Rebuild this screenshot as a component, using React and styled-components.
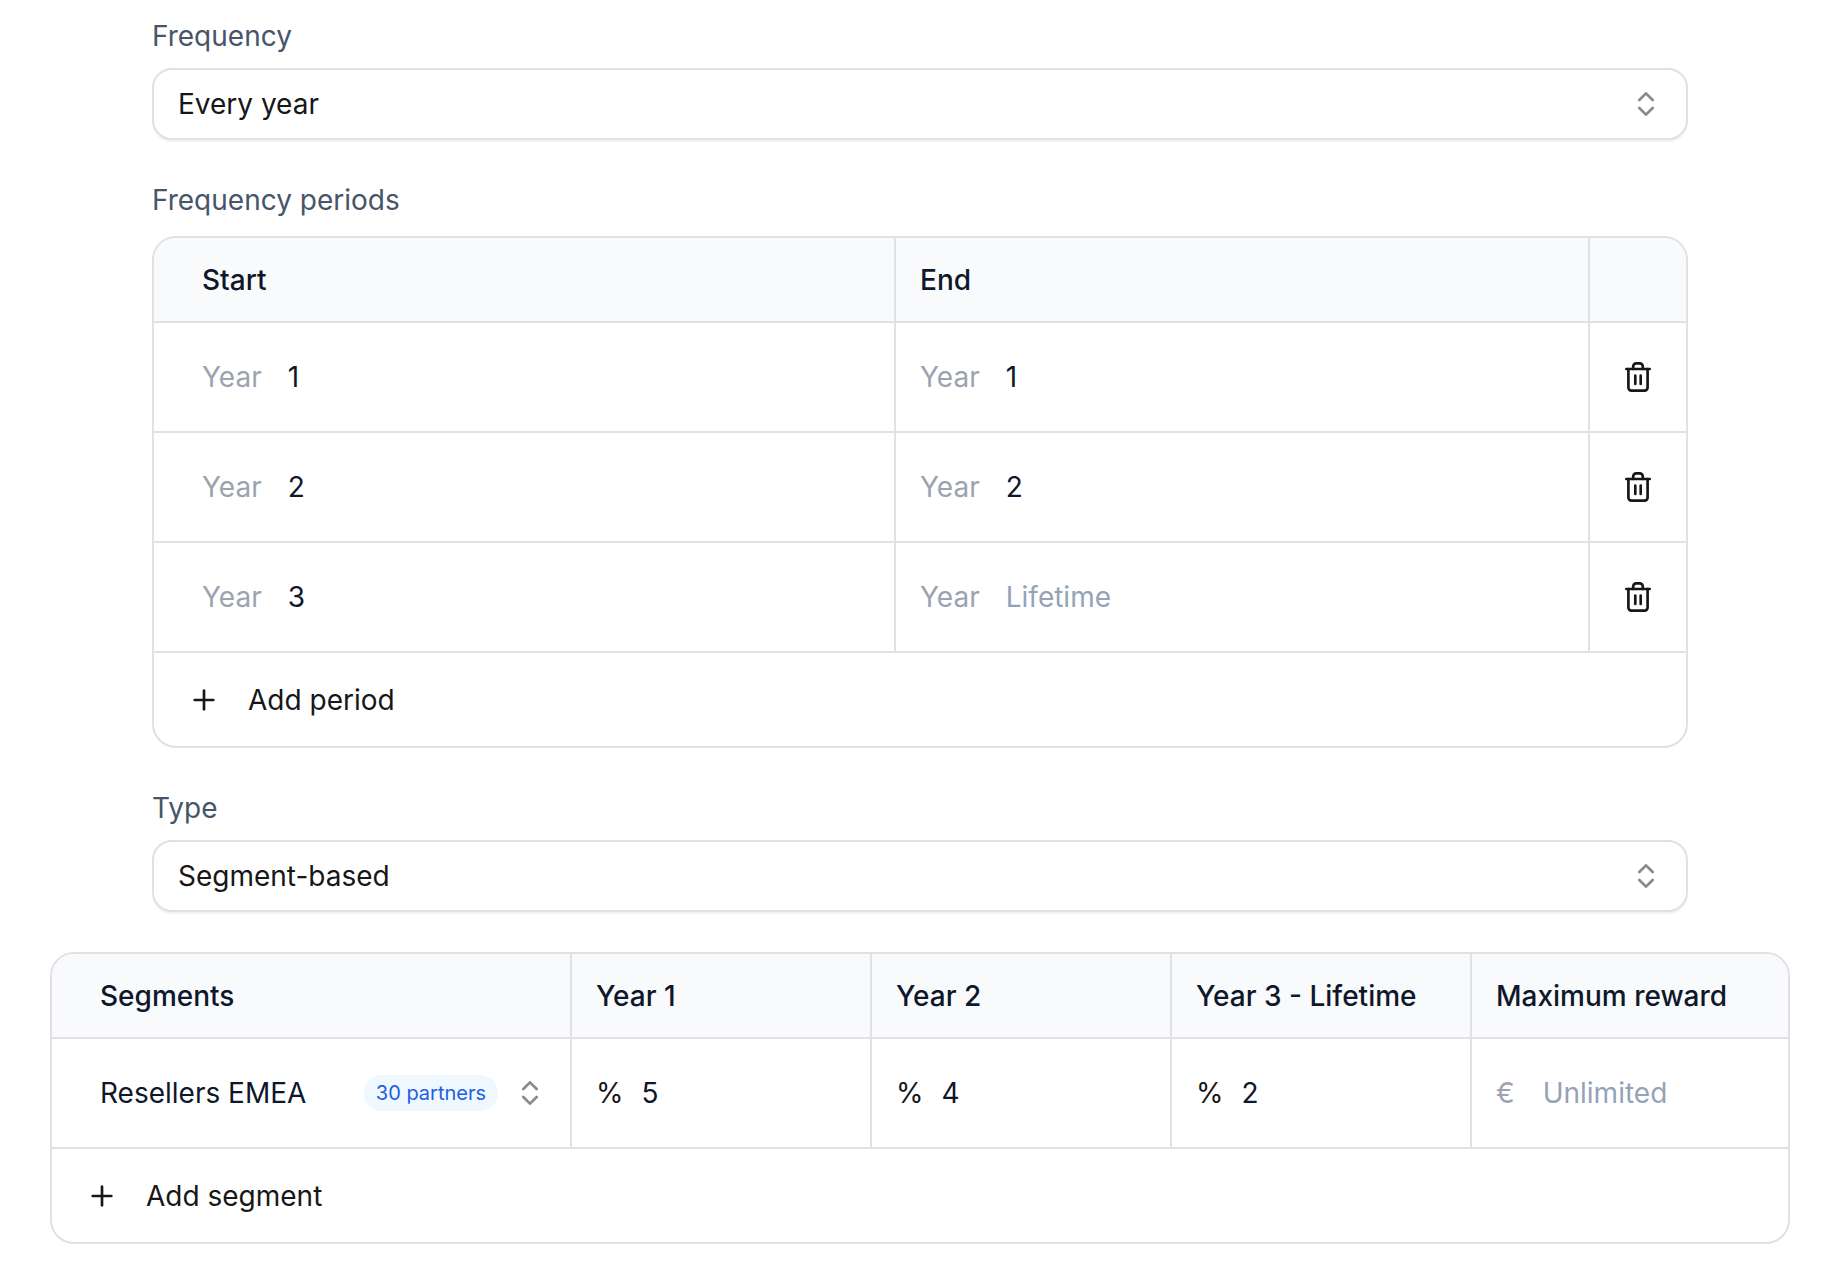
import React from 'react'
import styled, { createGlobalStyle } from 'styled-components'
import { ChevronsUpDown, Plus } from 'lucide-react'

const periods = [
  { start: '1', end: '1' },
  { start: '2', end: '2' },
  { start: '3', end: '' },
]

const rewards = [
  { label: 'Year 1', value: '5' },
  { label: 'Year 2', value: '4' },
  { label: 'Year 3 - Lifetime', value: '2' },
]

const TrashIcon = () => (
  <svg width="32" height="32" viewBox="0 0 32 32" fill="none" stroke="currentColor"
    strokeWidth="2.67" strokeLinecap="round" strokeLinejoin="round" aria-hidden="true">
    <path d="M4.3 8h23.4" />
    <path d="M11.2 8V5.4a3 3 0 0 1 3-3h3.6a3 3 0 0 1 3 3V8" />
    <path d="M6.4 8v18.6a3 3 0 0 0 3 3h13.2a3 3 0 0 0 3-3V8" />
    <path d="M13.3 14.7v8.2M18.7 14.7v8.2" />
  </svg>
)

const SelectField = ({ id, label, value }) => (
  <Field>
    <Label htmlFor={id}>{label}</Label>
    <SelectBox>
      <Select id={id} defaultValue={value}>
        <option>{value}</option>
      </Select>
      <Chevrons />
    </SelectBox>
  </Field>
)

const App = () => (
  <Page>
    <GlobalStyle />
    <Fields>
      <SelectField id="frequency" label="Frequency" value="Every year" />

      <Field $gap="16px">
        <Label as="span" id="periods">Frequency periods</Label>
        <Panel>
          <Table aria-labelledby="periods">
            <thead>
              <PeriodRow>
                <HeadCell>Start</HeadCell>
                <HeadCell>End</HeadCell>
                <HeadCell aria-label="Actions" />
              </PeriodRow>
            </thead>
            <tbody>
              {periods.map(({ start, end }, i) => (
                <PeriodRow key={start}>
                  <Cell>
                    <InputGroup $muted>
                      Year
                      <Input aria-label={`Start of period ${i + 1}`} defaultValue={start} />
                    </InputGroup>
                  </Cell>
                  <Cell>
                    <InputGroup $muted>
                      Year
                      <Input aria-label={`End of period ${i + 1}`} defaultValue={end} placeholder="Lifetime" />
                    </InputGroup>
                  </Cell>
                  <ActionCell>
                    <IconButton type="button" aria-label={`Delete period ${i + 1}`}>
                      <TrashIcon />
                    </IconButton>
                  </ActionCell>
                </PeriodRow>
              ))}
            </tbody>
          </Table>
          <AddButton type="button"><PlusIcon />Add period</AddButton>
        </Panel>
      </Field>

      <SelectField id="type" label="Type" value="Segment-based" />
    </Fields>

    <Panel>
      <Table aria-label="Segments">
        <thead>
          <SegmentRow>
            <HeadCell>Segments</HeadCell>
            {rewards.map(({ label }) => <HeadCell key={label}>{label}</HeadCell>)}
            <HeadCell>Maximum reward</HeadCell>
          </SegmentRow>
        </thead>
        <tbody>
          <SegmentRow>
            <Cell>
              <SegmentPicker>
                <SegmentSelect aria-label="Segment" defaultValue="Resellers EMEA">
                  <option>Resellers EMEA</option>
                </SegmentSelect>
                <Badge>30 partners</Badge>
                <ChevronsUpDown size={32} opacity={0.5} aria-hidden="true" />
              </SegmentPicker>
            </Cell>
            {rewards.map(({ label, value }) => (
              <Cell key={label}>
                <InputGroup $gap="18px">
                  %
                  <Input aria-label={`${label} reward`} defaultValue={value} />
                </InputGroup>
              </Cell>
            ))}
            <Cell>
              <InputGroup $muted $gap="28px">
                €
                <Input aria-label="Maximum reward" placeholder="Unlimited" />
              </InputGroup>
            </Cell>
          </SegmentRow>
        </tbody>
      </Table>
      <AddButton type="button"><PlusIcon />Add segment</AddButton>
    </Panel>
  </Page>
)

export default App

const line = '2px solid #e0e0e6'

const GlobalStyle = createGlobalStyle`
  *, *::before, *::after {
    box-sizing: border-box;
  }
  body {
    margin: 0;
    background: #fff;
    color: #171717;
    font-family: Inter, sans-serif;
    font-size: 28px;
    line-height: 40px;
  }
  input, select, button {
    font: inherit;
    color: inherit;
  }
`

const Page = styled.main`
  display: flex;
  flex-direction: column;
  gap: 40px;
  padding: 16px 48px 32px 50px;
`
const Fields = styled.div`
  display: flex;
  flex-direction: column;
  gap: 40px;
  padding: 0 102px;
`
const Field = styled.div`
  display: flex;
  flex-direction: column;
  gap: ${({ $gap = '12px' }) => $gap};
`
const Label = styled.label`
  color: #475569;
`
const SelectBox = styled.div`
  display: grid;
  align-items: center;
  border: ${line};
  border-radius: 20px;
  box-shadow: 0 2px 0 rgba(0, 0, 0, 0.05);
`
const Select = styled.select`
  grid-area: 1 / 1;
  width: 100%;
  height: 68px;
  padding: 0 72px 0 24px;
  border: 0;
  border-radius: 18px;
  background: transparent;
  appearance: none;
`
const Chevrons = styled(ChevronsUpDown).attrs({
  size: 32,
  opacity: 0.5,
  'aria-hidden': true,
})`
  grid-area: 1 / 1;
  justify-self: end;
  margin-right: 24px;
  pointer-events: none;
`
const Panel = styled.section`
  overflow: hidden;
  border: ${line};
  border-radius: 24px;
`
const Table = styled.table`
  display: block;
  width: 100%;

  thead, tbody {
    display: block;
  }
`
const Row = styled.tr`
  display: grid;
  border-bottom: ${line};
`
const PeriodRow = styled(Row)`
  grid-template-columns: calc(50% - 24px) 1fr 96px;
`
const SegmentRow = styled(Row)`
  grid-template-columns: 520fr 300fr 300fr 300fr 316fr;
`
const HeadCell = styled.th`
  display: flex;
  align-items: center;
  min-width: 0;
  height: 83px;
  padding: 0 24px;
  background: #f8fafc;
  color: #0f172a;
  font-weight: 500;
  white-space: nowrap;

  &:first-child {
    padding-left: 48px;
  }
  &:not(:last-child) {
    border-right: ${line};
  }
`
const Cell = styled.td`
  display: flex;
  align-items: center;
  min-width: 0;
  height: 108px;
  padding: 0 24px;

  &:first-child {
    padding-left: 48px;
  }
  &:not(:last-child) {
    border-right: ${line};
  }
`
const ActionCell = styled(Cell)`
  justify-content: center;
  padding: 0;
`
const InputGroup = styled.label`
  display: flex;
  flex: 1;
  gap: ${({ $gap = '26px' }) => $gap};
  min-width: 0;
  color: ${({ $muted }) => $muted ? '#9ca3af' : 'inherit'};
`
const Input = styled.input`
  flex: 1;
  min-width: 0;
  width: 100%;
  height: 40px;
  padding: 0;
  border: 0;
  background: transparent;
  color: #0f172a;

  &::placeholder {
    color: #94a3b8;
    opacity: 1;
  }
`
const IconButton = styled.button`
  display: flex;
  padding: 0;
  border: 0;
  background: transparent;
  cursor: pointer;
`
const SegmentPicker = styled.div`
  display: flex;
  flex: 1;
  align-items: center;
  gap: 16px;
  min-width: 0;
`
const SegmentSelect = styled.select`
  flex: 1;
  min-width: 0;
  height: 40px;
  padding: 0;
  border: 0;
  background: transparent;
  color: #0f172a;
  appearance: none;
`
const Badge = styled.span`
  padding: 2px 12px;
  border-radius: 18px;
  background: #eff8ff;
  color: #1d60e0;
  font-size: 20px;
  line-height: 32px;
  white-space: nowrap;
`
const AddButton = styled.button`
  display: flex;
  align-items: center;
  gap: 28px;
  width: 100%;
  height: 93px;
  padding: 0 34px;
  border: 0;
  background: transparent;
  cursor: pointer;
`
const PlusIcon = styled(Plus).attrs({
  size: 32,
  strokeWidth: 2,
  'aria-hidden': true,
})``
